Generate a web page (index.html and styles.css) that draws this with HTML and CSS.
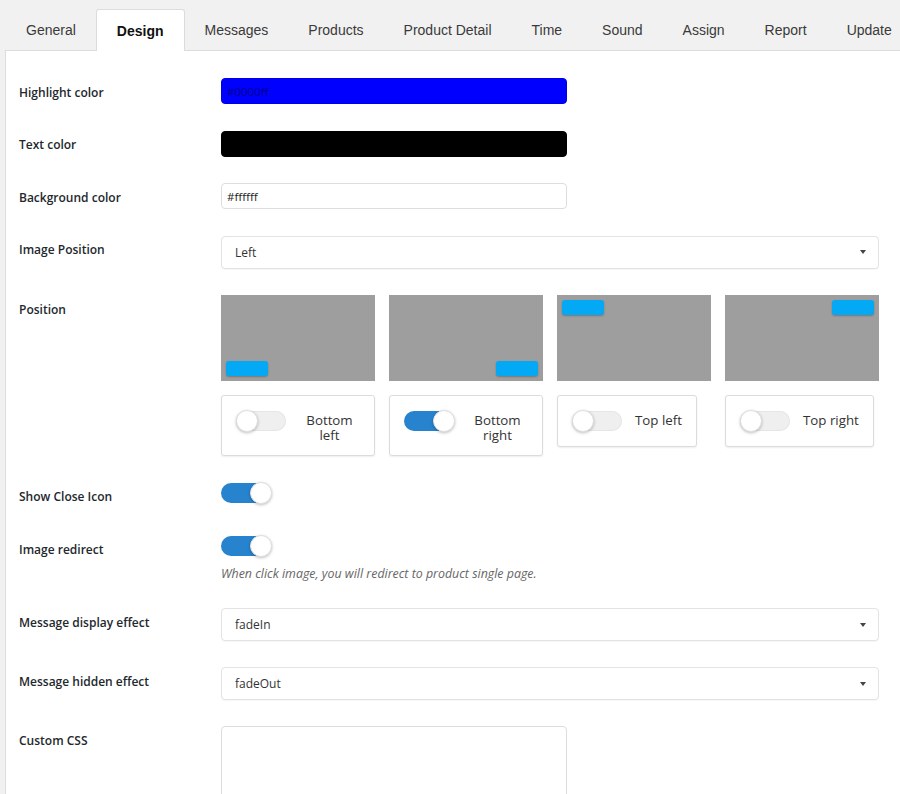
FILE: index.html
```html
<!DOCTYPE html>
<html>
<head>
<meta charset="utf-8">
<title>Design</title>
<link rel="stylesheet" href="styles.css">
</head>
<body>
<nav class="tabs">
  <a class="tab">General</a>
  <a class="tab active">Design</a>
  <a class="tab">Messages</a>
  <a class="tab">Products</a>
  <a class="tab">Product Detail</a>
  <a class="tab">Time</a>
  <a class="tab">Sound</a>
  <a class="tab">Assign</a>
  <a class="tab">Report</a>
  <a class="tab">Update</a>
</nav>
<div class="panel">
  <div class="row row-input">
    <div class="label">Highlight color</div>
    <div class="field"><input class="color-input hl" type="text" value="#0000ff" readonly></div>
  </div>
  <div class="row row-input">
    <div class="label">Text color</div>
    <div class="field"><input class="color-input tc" type="text" value="#000000" readonly></div>
  </div>
  <div class="row row-input">
    <div class="label">Background color</div>
    <div class="field"><input class="color-input" type="text" value="#ffffff" readonly></div>
  </div>
  <div class="row row-input">
    <div class="label">Image Position</div>
    <div class="field"><div class="select"><span>Left</span><span class="caret"></span></div></div>
  </div>
  <div class="row">
    <div class="label">Position</div>
    <div class="field">
      <div class="positions">
        <div class="preview bl"><span class="pill"></span></div>
        <div class="preview br"><span class="pill"></span></div>
        <div class="preview tl"><span class="pill"></span></div>
        <div class="preview tr"><span class="pill"></span></div>
        <div class="card"><span class="switch"><span class="track"><span class="knob"></span></span></span><span class="card-label">Bottom left</span></div>
        <div class="card"><span class="switch on"><span class="track"><span class="knob"></span></span></span><span class="card-label">Bottom right</span></div>
        <div class="card"><span class="switch"><span class="track"><span class="knob"></span></span></span><span class="card-label">Top left</span></div>
        <div class="card"><span class="switch"><span class="track"><span class="knob"></span></span></span><span class="card-label">Top right</span></div>
      </div>
    </div>
  </div>
  <div class="row">
    <div class="label">Show Close Icon</div>
    <div class="field"><span class="switch on"><span class="track"><span class="knob"></span></span></span></div>
  </div>
  <div class="row">
    <div class="label">Image redirect</div>
    <div class="field">
      <span class="switch on"><span class="track"><span class="knob"></span></span></span>
      <p class="desc">When click image, you will redirect to product single page.</p>
    </div>
  </div>
  <div class="row">
    <div class="label">Message display effect</div>
    <div class="field"><div class="select"><span>fadeIn</span><span class="caret"></span></div></div>
  </div>
  <div class="row">
    <div class="label">Message hidden effect</div>
    <div class="field"><div class="select"><span>fadeOut</span><span class="caret"></span></div></div>
  </div>
  <div class="row">
    <div class="label">Custom CSS</div>
    <div class="field"><textarea class="css-area"></textarea></div>
  </div>
</div>
</body>
</html>
```
FILE: styles.css
```css
html, body {
  margin: 0;
  background: #f1f1f1;
  font-family: "Open Sans", "Noto Sans", sans-serif;
  color: #23282d;
}

.tabs {
  display: flex;
  height: 50px;
  box-sizing: border-box;
  padding: 9px 0 0 6px;
  align-items: flex-start;
}

.tab {
  display: block;
  height: 41px;
  line-height: 42px;
  padding: 0 20px;
  font-family: "Liberation Sans", Arial, sans-serif;
  font-size: 14px;
  color: #3a3a3a;
  white-space: nowrap;
}

.tab.active {
  position: relative;
  z-index: 1;
  height: 41px;
  background: #fff;
  border: 1px solid #dcdcdc;
  border-bottom: 0;
  border-radius: 3px 3px 0 0;
  font-weight: bold;
  color: #111;
}

.panel {
  margin-left: 5px;
  background: #fff;
  border-top: 1px solid #dcdcdc;
  border-left: 1px solid #dcdcdc;
  padding: 14px 21px 0 13px;
  min-height: 760px;
}

.row {
  display: grid;
  grid-template-columns: 202px 1fr;
  padding: 13px 0;
}

.row.row-input {
  padding-bottom: 13.5px;
}

.label {
  padding-top: 6.5px;
  font-size: 12px;
  line-height: 16px;
  font-weight: 600;
  color: #23282d;
}

.field {
  min-width: 0;
}

.color-input {
  display: block;
  width: 346px;
  height: 26px;
  box-sizing: border-box;
  margin: 0;
  border: 1px solid #dddddd;
  border-radius: 4px;
  padding: 0 5px;
  font-family: "Open Sans", sans-serif;
  font-size: 11.5px;
  color: #222;
  background: #fff;
  outline: none;
}

.color-input.hl {
  background: #0000ff;
  border-color: #0000e8;
  color: #00008a;
}

.color-input.tc {
  background: #000;
  border-color: #000;
  color: #000;
}

.select {
  display: flex;
  align-items: center;
  justify-content: space-between;
  height: 33px;
  box-sizing: border-box;
  border: 1px solid #e3e3e3;
  border-radius: 4px;
  padding: 0 12px 0 13px;
  font-size: 12px;
  color: #333;
  background: #fff;
  box-shadow: 0 1px 1px rgba(0, 0, 0, 0.04);
}

.caret {
  width: 0;
  height: 0;
  border-left: 3.5px solid transparent;
  border-right: 3.5px solid transparent;
  border-top: 4px solid #444;
}

.positions {
  display: grid;
  grid-template-columns: repeat(4, 154px);
  column-gap: 14px;
  row-gap: 14px;
  align-items: start;
}

.preview {
  display: flex;
  height: 86px;
  box-sizing: border-box;
  padding: 5px;
  background: #9e9e9e;
}

.preview.bl { align-items: flex-end; justify-content: flex-start; }
.preview.br { align-items: flex-end; justify-content: flex-end; }
.preview.tl { align-items: flex-start; justify-content: flex-start; }
.preview.tr { align-items: flex-start; justify-content: flex-end; }

.pill {
  display: block;
  width: 42px;
  height: 15px;
  border-radius: 3px;
  background: #03a9f4;
  box-shadow: 0 1px 2px rgba(0, 0, 0, 0.25);
}

.card {
  justify-self: start;
  display: flex;
  align-items: flex-start;
  box-sizing: border-box;
  max-width: 154px;
  padding: 14px 14px 13px 14px;
  border: 1px solid #dcdcdc;
  border-radius: 3px;
  background: #fff;
  box-shadow: 0 1px 2px rgba(0, 0, 0, 0.07);
}

.card-label {
  margin-left: 13px;
  padding-top: 3px;
  font-size: 13.3px;
  line-height: 14.5px;
  color: #333;
  text-align: center;
  min-width: 0;
}

.switch {
  display: block;
  flex: none;
  width: 50px;
  height: 26px;
}

.card .switch {
  height: 23px;
}

.track {
  display: block;
  position: relative;
  margin-top: 1px;
  height: 20px;
  border-radius: 10px;
  background: #efefef;
  box-shadow: inset 0 0 0 1px #e6e6e6;
}

.knob {
  position: absolute;
  top: -1px;
  left: 0;
  width: 22px;
  height: 22px;
  box-sizing: border-box;
  border-radius: 50%;
  background: #fff;
  border: 1px solid #e0e0e0;
  box-shadow: 0 1px 3px rgba(0, 0, 0, 0.25);
}

.switch.on .track {
  background: #2783ce;
  box-shadow: none;
}

.switch.on .knob {
  left: auto;
  right: -1px;
}

.desc {
  margin: 4px 0 0;
  font-size: 12.4px;
  line-height: 16px;
  font-style: italic;
  color: #666;
}

.css-area {
  display: block;
  width: 346px;
  height: 130px;
  box-sizing: border-box;
  margin: 0;
  border: 1px solid #dddddd;
  border-radius: 4px;
  resize: none;
  background: #fff;
}
```
